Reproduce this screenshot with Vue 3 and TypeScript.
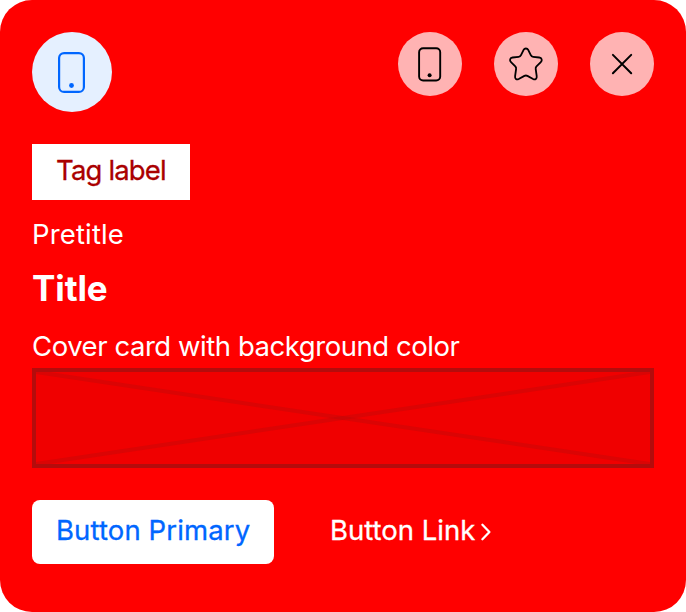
<script setup lang="ts">
interface Action {
  name: string
  icon: 'mobile' | 'star' | 'close'
}

const actions: Action[] = [
  { name: 'Device', icon: 'mobile' },
  { name: 'Favorite', icon: 'star' },
  { name: 'Close', icon: 'close' },
]
</script>

<template>
  <article class="card">
    <header class="top">
      <div class="asset">
        <svg width="48" height="48" viewBox="0 0 48 48" fill="none">
          <rect x="11.1" y="5.1" width="24.8" height="38.8" rx="5" stroke="#0066ff" stroke-width="2.2" />
          <circle cx="23.5" cy="37.5" r="2.4" fill="#0066ff" />
        </svg>
      </div>
      <div class="actions">
        <button v-for="action in actions" :key="action.name" class="action" type="button" :aria-label="action.name">
          <svg v-if="action.icon === 'mobile'" width="40" height="40" viewBox="0 0 40 40" fill="none">
            <rect x="9.1" y="4.2" width="21.1" height="32.3" rx="4" stroke="#000" stroke-width="1.9" />
            <circle cx="19.6" cy="31.3" r="2" fill="#000" />
          </svg>
          <svg v-else-if="action.icon === 'star'" width="40" height="40" viewBox="0 0 40 40" fill="none">
            <path
              d="M17.6 5.9C18.5 4 21.3 4 22.2 5.9L24.8 11.2C25.3 12.3 26 12.8 27.1 12.9L33.2 13.5C35.8 13.8 36.6 16.3 34.8 18.1L30.5 22.4C29.8 23.2 29.5 24 29.7 25L30.7 32.1C31.1 34.8 29.3 36.1 27.1 35L21.4 31.9C20.4 31.4 19.4 31.4 18.4 31.9L12.7 35C10.5 36.1 8.7 34.8 9.1 32.1L10.1 25C10.3 24 10 23.2 9.3 22.4L5 18.1C3.2 16.3 4 13.8 6.6 13.5L12.7 12.9C13.8 12.8 14.5 12.3 15 11.2Z"
              stroke="#000"
              stroke-width="1.8"
              stroke-linejoin="round"
            />
          </svg>
          <svg v-else width="40" height="40" viewBox="0 0 40 40" fill="none">
            <path d="M10.9 10.9L29.2 29.2M29.2 10.9L10.9 29.2" stroke="#000" stroke-width="2" stroke-linecap="round" />
          </svg>
        </button>
      </div>
    </header>

    <div class="tag"><span class="tag-text">Tag label</span></div>
    <p class="pretitle">Pretitle</p>
    <h2 class="title">Title</h2>
    <p class="description">Cover card with background color</p>

    <div class="slot">
      <svg class="cross" viewBox="0 0 614 92" preserveAspectRatio="none">
        <path d="M0 0L614 92" />
        <path d="M614 0L0 92" />
      </svg>
    </div>

    <footer class="buttons">
      <button class="primary" type="button"><span class="primary-text">Button Primary</span></button>
      <a class="link">
        <span class="link-text">Button Link</span>
        <svg class="chevron" width="12" height="20" viewBox="0 0 12 20" fill="none">
          <path d="M2.4 2.8L9.4 10L2.4 17.2" stroke="#fff" stroke-width="2.3" stroke-linecap="round" stroke-linejoin="round" />
        </svg>
      </a>
    </footer>
  </article>
</template>

<style>
body {
  background: #fff;
}
</style>

<style scoped>
.card {
  box-sizing: border-box;
  width: 686px;
  height: 612px;
  padding: 32px;
  display: flex;
  flex-direction: column;
  align-items: flex-start;
  border-radius: 32px;
  background: #f00;
  color: #fff;
  font-family: Inter, "Liberation Sans", sans-serif;
  font-size: 27.5px;
  line-height: 40px;
  white-space: nowrap;
}
.top {
  width: 100%;
  display: flex;
  justify-content: space-between;
  align-items: flex-start;
}
.asset {
  width: 80px;
  height: 80px;
  display: grid;
  place-items: center;
  border-radius: 50%;
  background: #e5f0ff;
}
.actions {
  display: flex;
  gap: 32px;
}
.action {
  width: 64px;
  height: 64px;
  padding: 0;
  border: 0;
  display: grid;
  place-items: center;
  border-radius: 50%;
  background: #ffb3b3;
}
.asset svg,
.action svg {
  display: block;
}
.tag {
  box-sizing: border-box;
  width: 158px;
  height: 56px;
  margin-top: 32px;
  padding: 6px 24px 10px;
  background: #fff;
  color: #aa0000;
}
.tag-text {
  letter-spacing: -0.85px;
}
.tag-text,
.primary-text,
.link-text {
  -webkit-text-stroke: 0.3px currentColor;
}
p,
h2 {
  margin: 0;
}
.pretitle {
  margin-top: 14px;
  letter-spacing: 0.15px;
}
.title {
  margin-top: 10px;
  font-size: 35px;
  line-height: 48px;
  font-weight: 700;
  letter-spacing: -0.1px;
}
.description {
  margin-top: 14px;
  letter-spacing: -0.45px;
}
.slot {
  box-sizing: border-box;
  width: 100%;
  height: 100px;
  margin-top: 2px;
  border: 4px solid #b40c0c;
  background: #f00000;
}
.cross {
  display: block;
  width: 100%;
  height: 100%;
  fill: none;
  stroke: rgb(180 12 12 / 0.35);
  stroke-width: 4;
}
.buttons {
  display: flex;
  align-items: center;
  margin-top: 32px;
}
.primary {
  box-sizing: border-box;
  width: 242px;
  height: 64px;
  padding: 0 0 4px 24px;
  border: 0;
  border-radius: 8px;
  background: #fff;
  color: #06f;
  font: inherit;
  text-align: left;
}
.primary-text {
  letter-spacing: 0.12px;
}
.link {
  display: flex;
  align-items: center;
  margin-left: 56px;
  padding-bottom: 4px;
}
.link-text {
  width: 145px;
}
.chevron {
  margin: 4px 0 0 5px;
}
</style>
